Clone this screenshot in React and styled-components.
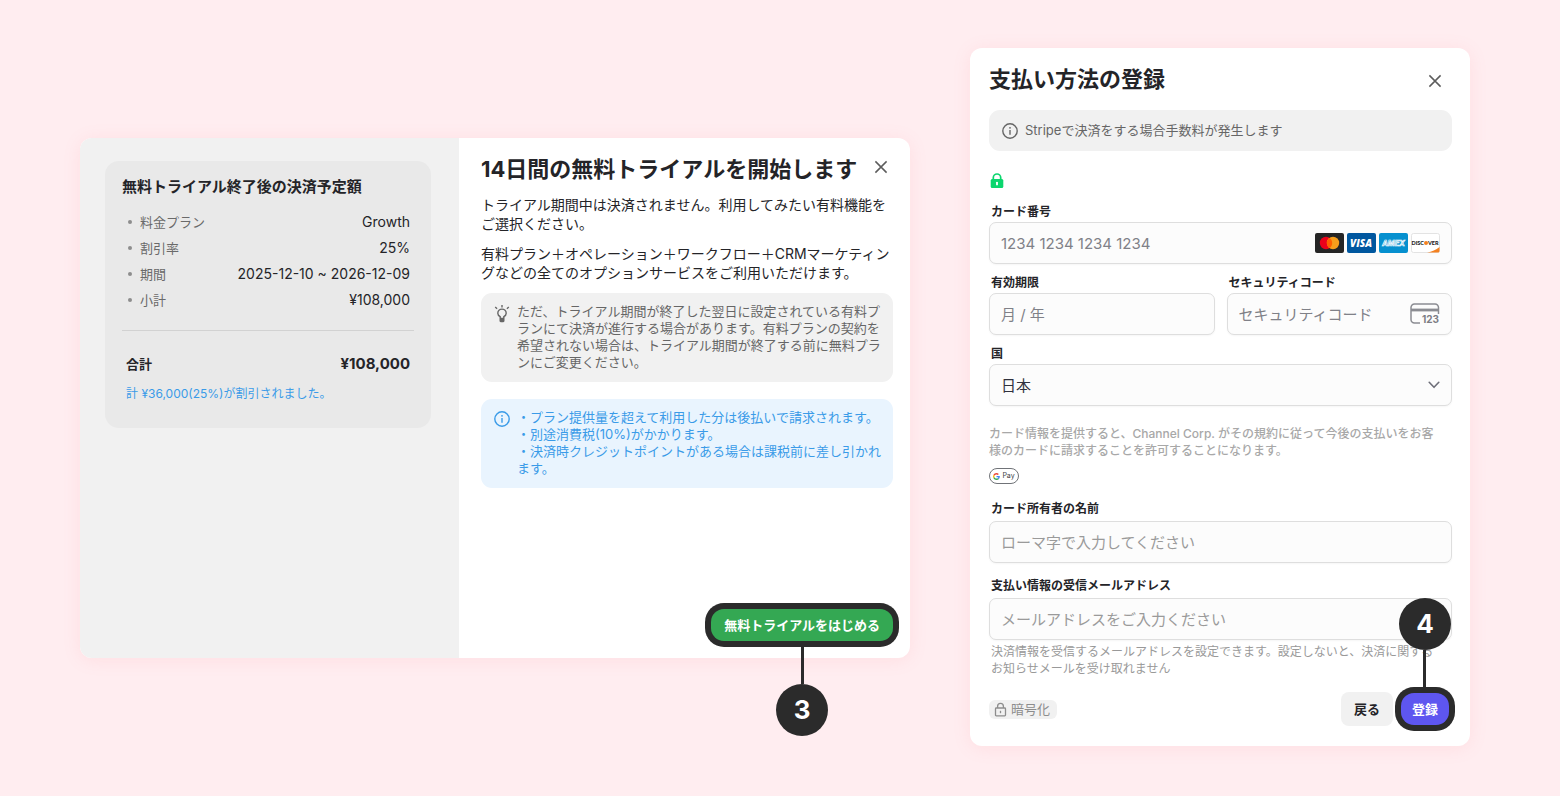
import React from "react";
import styled, { createGlobalStyle, css } from "styled-components";

const GlobalStyle = createGlobalStyle`
  *, *::before, *::after { box-sizing: border-box; }
  body {
    margin: 0;
    background: #ffedf0;
    color: #242428;
    font-family: Inter, "Noto Sans CJK JP", sans-serif;
    font-size: 13px;
    line-height: 17px;
  }
  h2, h3, p, ul, dl, dd { margin: 0; padding: 0; }
  button, input, select { font: inherit; color: inherit; }
`;

const Page = styled.main`
  min-height: 100vh;
  display: grid;
  grid-template-columns: minmax(0, 83fr) minmax(0, 50fr);
  align-content: center;
  align-items: end;
  gap: 60px;
  padding: 48px 90px 50px 80px;
`;

const Dialog = styled.section`
  background: #fff;
  border-radius: 12px;
  box-shadow: 0 2px 18px rgba(255, 120, 135, 0.12);
`;

const TrialDialog = styled(Dialog)`
  display: grid;
  grid-template-columns: 379px minmax(0, 1fr);
  min-height: 520px;
  margin-bottom: 88px;
`;

/* Order summary */
const Summary = styled.aside`
  padding: 23px 28px 23px 25px;
  background: #f1f1f1;
  border-radius: 12px 0 0 12px;
`;

const SummaryCard = styled.div`
  padding: 16px 17px 25px;
  background: #e9e9e9;
  border-radius: 14px;
`;

const SummaryTitle = styled.h3`
  font-size: 15px;
  line-height: 20px;
  font-weight: 700;
  margin-bottom: 12px;
`;

const SummaryList = styled.dl`
  padding-bottom: 17px;
  border-bottom: 1px solid #d2d2d2;
`;

const SummaryRow = styled.div`
  display: flex;
  align-items: center;
  justify-content: space-between;
  line-height: 26px;
  padding: 0 4px 0 6px;
`;

const SummaryTerm = styled.dt`
  display: flex;
  align-items: center;
  gap: 8px;
  color: #6a6a6a;
  &::before {
    content: "";
    width: 4px;
    height: 4px;
    border-radius: 50%;
    background: #8d8d8d;
  }
`;

const SummaryValue = styled.dd`
  font-size: 14px;
`;

const TotalRow = styled.div`
  display: flex;
  align-items: center;
  justify-content: space-between;
  padding: 0 4px;
  margin-top: 21px;
  line-height: 24px;
  font-weight: 700;
`;

const TotalValue = styled.strong`
  font-size: 15px;
  font-weight: 700;
`;

const DiscountNote = styled.p`
  margin-top: 9px;
  padding: 0 4px;
  font-size: 12px;
  line-height: 18px;
  color: #3a9be8;
`;

/* Trial details */
const TrialBody = styled.div`
  display: flex;
  flex-direction: column;
  padding: 17px 17px 17px 22px;
`;

const Header = styled.header`
  display: flex;
  justify-content: space-between;
  align-items: flex-start;
`;

const Title = styled.h2`
  font-size: 22px;
  line-height: 28px;
  font-weight: 700;
`;

const CloseButton = styled.button`
  display: grid;
  place-items: center;
  width: 24px;
  height: 24px;
  padding: 0;
  border: 0;
  background: none;
  color: #5c5c5c;
  margin: ${(p) => (p.$low ? "4px 5px 0 0" : "0")};
`;

const Paragraph = styled.p`
  font-size: 14px;
  line-height: 19px;
  margin-top: ${(p) => (p.$first ? 12 : 11)}px;
`;

const notice = {
  gray: css`
    background: #f1f1f1;
    color: #666;
  `,
  blue: css`
    background: #e9f4fe;
    color: #3a9be8;
  `,
};

const Notice = styled.div`
  display: flex;
  align-items: ${(p) => (p.$single ? "center" : "flex-start")};
  gap: 7px;
  padding: ${(p) => (p.$single ? "12px 13px" : "10px 10px 11px 13px")};
  margin-top: ${(p) => p.$space}px;
  border-radius: 11px;
  ${(p) => notice[p.$tone]}
  svg {
    flex: none;
    margin-top: ${(p) => (p.$single ? 0 : 2)}px;
  }
`;

const NoticeList = styled.ul`
  list-style: none;
`;

const Actions = styled.footer`
  display: flex;
  align-items: center;
  justify-content: flex-end;
  gap: 8px;
  margin-top: auto;
`;

const Highlight = styled.div`
  position: relative;
  border-radius: 13px;
  background: #2b2b2b;
  box-shadow: 0 0 0 6px #2b2b2b;
  margin-right: ${(p) => p.$inset || 0}px;
`;

const Callout = styled.div`
  position: absolute;
  left: 50%;
  transform: translateX(-50%);
  display: flex;
  flex-direction: ${(p) => (p.$above ? "column-reverse" : "column")};
  align-items: center;
  ${(p) => (p.$above ? "bottom" : "top")}: calc(100% + 5px);
  &::before {
    content: "";
    width: 3px;
    height: 38px;
    background: #2b2b2b;
  }
`;

const CalloutNumber = styled.span`
  display: grid;
  place-items: center;
  width: 52px;
  height: 52px;
  border-radius: 50%;
  background: #2b2b2b;
  color: #fff;
  font-size: 26px;
  line-height: 32px;
  font-weight: 700;
`;

const Button = styled.button`
  display: block;
  border: 0;
  padding: 0 ${(p) => (p.$compact ? 11 : 13)}px;
  height: ${(p) => (p.$plain ? 34 : 32)}px;
  border-radius: ${(p) => (p.$plain ? 8 : 13)}px;
  background: ${(p) => p.$bg};
  color: ${(p) => (p.$plain ? "#242428" : "#fff")};
  font-size: 13px;
  font-weight: 700;
  white-space: nowrap;
`;

/* Payment form */
const PaymentDialog = styled(Dialog)`
  padding: 17px 18px 20px 19px;
`;

const Secure = styled.div`
  display: flex;
  padding-left: 1px;
  margin: 22px 0 15px;
`;

const Field = styled.div`
  display: flex;
  flex-direction: column;
  gap: ${(p) => (p.$roomy ? 4 : 2)}px;
  margin-top: ${(p) => p.$space || 0}px;
`;

const Label = styled.label`
  padding-left: 2px;
  font-size: 12px;
  font-weight: ${(p) => (p.$bold ? 700 : 600)};
`;

const Columns = styled.div`
  display: grid;
  grid-template-columns: repeat(2, minmax(0, 1fr));
  gap: 12px;
  margin-top: 10px;
`;

const InputBox = styled.div`
  display: flex;
  align-items: center;
  height: 42px;
  padding: 0 11px;
  border: 1px solid #dedede;
  border-radius: 7px;
  background: #fcfcfc;
  box-shadow: 0 1px 2px rgba(0, 0, 0, 0.04);
  svg {
    flex: none;
  }
`;

const control = css`
  flex: 1;
  width: 100%;
  min-width: 0;
  height: 100%;
  padding: 0;
  border: 0;
  outline: 0;
  background: none;
  font-size: 15px;
`;

const Input = styled.input`
  ${control}
  &::placeholder {
    color: ${(p) => (p.$soft ? "#9a9a9a" : "#808188")};
    opacity: 1;
  }
`;

const Select = styled.select`
  ${control}
  appearance: none;
  color: #30313d;
`;

const CardBrands = styled.div`
  display: flex;
  gap: 3px;
`;

const Legal = styled.p`
  margin-top: 19px;
  padding-right: 8px;
  font-size: 12px;
  font-weight: 500;
  color: #a8a8a8;
`;

const PayBadge = styled.div`
  display: flex;
  align-items: center;
  justify-content: center;
  gap: 2px;
  width: 30px;
  height: 16px;
  margin: 9px 0 16px;
  border: 1px solid #707378;
  border-radius: 8px;
  font-size: 7px;
  line-height: 10px;
  color: #3c4043;
`;

const Helper = styled.p`
  margin-top: 3px;
  padding: 0 8px 0 2px;
  font-size: 12px;
  color: #999;
`;

const FormFooter = styled.div`
  display: flex;
  align-items: center;
  justify-content: space-between;
  margin-top: 15px;
`;

const Encrypted = styled.span`
  display: inline-flex;
  align-items: center;
  gap: 4px;
  height: 19px;
  padding: 0 7px 0 5px;
  border-radius: 6px;
  background: #f1f1f1;
  color: #8d8d8d;
`;

const CloseIcon = () => (
  <svg width="14" height="14" viewBox="0 0 14 14" fill="none" stroke="currentColor" strokeWidth="1.5">
    <path d="M1.4 1.4l11.2 11.2M12.6 1.4L1.4 12.6" />
  </svg>
);

const InfoIcon = () => (
  <svg width="16" height="16" viewBox="0 0 16 16" fill="none" stroke="currentColor" strokeWidth="1.4">
    <circle cx="8" cy="8" r="7.2" />
    <path d="M8 7v4.8" />
    <circle cx="8" cy="4.8" r="0.9" fill="currentColor" stroke="none" />
  </svg>
);

const BulbIcon = () => (
  <svg width="16" height="18" viewBox="0 0 16 18" fill="none" stroke="currentColor" strokeWidth="1.4">
    <path d="M6.2 13v-1.300C4.600 10.900 3.800 9.700 3.800 8.300a4.200 4.200 0 0 1 8.400 0c0 1.400-.8 2.600-2.400 3.400V13" />
    <path d="M5.500 12.800h5v3c0 .9-.5 1.400-1.300 1.400H6.800c-.8 0-1.300-.5-1.300-1.400z" fill="currentColor" stroke="none" />
    <path d="M8 0v2.400M1.200 2l1.900 1.700M14.800 2l-1.900 1.700" />
  </svg>
);

const GreenLock = () => (
  <svg width="14" height="15" viewBox="0 0 14 15">
    <path d="M3.300 7V4.700a3.700 3.700 0 0 1 7.400 0V7" fill="none" stroke="#0bd66e" strokeWidth="1.700" />
    <rect x="0.700" y="5.900" width="12.600" height="9" rx="1.500" fill="#0bd66e" />
    <path d="M7 8.700a1.100 1.100 0 0 1 .9 1.700v1.800H6.100v-1.800A1.100 1.100 0 0 1 7 8.700z" fill="#fff" />
  </svg>
);

const OutlineLock = () => (
  <svg width="13" height="15" viewBox="0 0 13 15" fill="none" stroke="currentColor" strokeWidth="1.300">
    <path d="M3.600 6V4.200a2.900 2.900 0 0 1 5.800 0V6" />
    <rect x="1.500" y="6" width="10" height="7.800" rx="0.800" />
    <path d="M6.500 8.800v2.400" />
  </svg>
);

const Mastercard = () => (
  <svg width="29" height="20" viewBox="0 0 29 20" role="img" aria-label="Mastercard">
    <rect width="29" height="20" rx="2" fill="#252525" />
    <circle cx="11" cy="10" r="6.200" fill="#eb001b" />
    <circle cx="18" cy="10" r="6.200" fill="#f79e1b" />
    <path d="M14.500 4.900a6.200 6.200 0 0 1 0 10.200a6.200 6.200 0 0 1 0-10.200z" fill="#ff5f00" />
  </svg>
);

const Visa = () => (
  <svg width="29" height="20" viewBox="0 0 29 20" role="img" aria-label="Visa">
    <rect width="29" height="20" rx="2" fill="#00579f" />
    <text x="14" y="14" textAnchor="middle" fontFamily="Open Sans" fontSize="10" fontWeight="800" fontStyle="italic" fill="#fff">VISA</text>
  </svg>
);

const Amex = () => (
  <svg width="29" height="20" viewBox="0 0 58 40" role="img" aria-label="American Express">
    <rect width="58" height="40" rx="4" fill="#0690cf" />
    <text x="29" y="25" textAnchor="middle" fontFamily="Inter" fontSize="15" fontWeight="700" fontStyle="italic" fill="#0690cf" stroke="#fff" strokeWidth="1.400">AMEX</text>
  </svg>
);

const Discover = () => (
  <svg width="29" height="20" viewBox="0 0 58 40" role="img" aria-label="Discover">
    <rect x="1" y="1" width="56" height="38" rx="4" fill="#fff" stroke="#e3e3e3" strokeWidth="2" />
    <path d="M32 39C42 37 50 34 57 28v8a3 3 0 0 1-3 3z" fill="#f48120" />
    <text x="26" y="24" textAnchor="end" fontFamily="Lato" fontSize="11" fontWeight="900" fill="#222">DISC</text>
    <circle cx="30" cy="20" r="4" fill="#f48120" />
    <text x="34" y="24" fontFamily="Lato" fontSize="11" fontWeight="900" fill="#222">VER</text>
  </svg>
);

const CvcIcon = () => (
  <svg width="30" height="22" viewBox="0 0 30 22" fill="none" stroke="#8b8c92">
    <path d="M10 20H4.500A3.500 3.500 0 0 1 1 16.500V4.500A3.500 3.500 0 0 1 4.500 1h20.500A3.500 3.500 0 0 1 28.500 4.500V11" strokeWidth="1.500" />
    <path d="M1 7h27.500" strokeWidth="2.800" />
    <text x="12" y="20" fontFamily="Inter" fontSize="10" fontWeight="700" fill="#7c7d84" stroke="none">123</text>
  </svg>
);

const Chevron = styled(({ className }) => (
  <svg className={className} width="12" height="8" viewBox="0 0 12 8" fill="none" stroke="#6d6e78" strokeWidth="1.600" strokeLinecap="round" strokeLinejoin="round">
    <path d="M1.200 1.300L6 6.300l4.800-5" />
  </svg>
))`
  pointer-events: none;
`;

const GoogleG = () => (
  <svg width="7" height="7" viewBox="0 0 48 48">
    <path fill="#EA4335" d="M24 9.500c3.540 0 6.710 1.220 9.210 3.600l6.850-6.850C35.900 2.380 30.470 0 24 0 14.620 0 6.510 5.380 2.560 13.220l7.980 6.190C12.430 13.720 17.740 9.500 24 9.500z" />
    <path fill="#4285F4" d="M46.980 24.550c0-1.570-.15-3.090-.38-4.550H24v9.020h12.940c-.58 2.960-2.260 5.480-4.780 7.180l7.730 6c4.510-4.180 7.090-10.360 7.090-17.650z" />
    <path fill="#FBBC05" d="M10.530 28.590c-.48-1.450-.76-2.990-.76-4.590s.27-3.140.76-4.590l-7.980-6.190C.92 16.460 0 20.120 0 24c0 3.880.92 7.540 2.560 10.780l7.970-6.190z" />
    <path fill="#34A853" d="M24 48c6.480 0 11.930-2.130 15.890-5.810l-7.730-6c-2.150 1.450-4.920 2.300-8.160 2.300-6.260 0-11.570-4.220-13.470-9.910l-7.980 6.190C6.510 42.620 14.620 48 24 48z" />
  </svg>
);

const summaryRows = [
  ["料金プラン", "Growth"],
  ["割引率", "25%"],
  ["期間", "2025-12-10 ~ 2026-12-09"],
  ["小計", "¥108,000"],
];

const billingNotes = [
  "・プラン提供量を超えて利用した分は後払いで請求されます。",
  "・別途消費税(10%)がかかります。",
  "・決済時クレジットポイントがある場合は課税前に差し引かれます。",
];

function StartTrial() {
  return (
    <TrialDialog aria-labelledby="trial-title">
      <Summary>
        <SummaryCard>
          <SummaryTitle>無料トライアル終了後の決済予定額</SummaryTitle>
          <SummaryList>
            {summaryRows.map(([term, value]) => (
              <SummaryRow key={term}>
                <SummaryTerm>{term}</SummaryTerm>
                <SummaryValue>{value}</SummaryValue>
              </SummaryRow>
            ))}
          </SummaryList>
          <TotalRow>
            <span>合計</span>
            <TotalValue>¥108,000</TotalValue>
          </TotalRow>
          <DiscountNote>計 ¥36,000(25%)が割引されました。</DiscountNote>
        </SummaryCard>
      </Summary>
      <TrialBody>
        <Header>
          <Title id="trial-title">14日間の無料トライアルを開始します</Title>
          <CloseButton type="button" aria-label="閉じる">
            <CloseIcon />
          </CloseButton>
        </Header>
        <Paragraph $first>
          トライアル期間中は決済されません。利用してみたい有料機能をご選択ください。
        </Paragraph>
        <Paragraph>
          有料プラン＋オペレーション＋ワークフロー＋CRMマーケティングなどの全てのオプションサービスをご利用いただけます。
        </Paragraph>
        <Notice $tone="gray" $space={11}>
          <BulbIcon />
          <p>
            ただ、トライアル期間が終了した翌日に設定されている有料プランにて決済が進行する場合があります。有料プランの契約を希望されない場合は、トライアル期間が終了する前に無料プランにご変更ください。
          </p>
        </Notice>
        <Notice $tone="blue" $space={17}>
          <InfoIcon />
          <NoticeList>
            {billingNotes.map((note) => (
              <li key={note}>{note}</li>
            ))}
          </NoticeList>
        </Notice>
        <Actions>
          <Highlight>
            <Button type="button" $bg="#34a853">無料トライアルをはじめる</Button>
            <Callout>
              <CalloutNumber>3</CalloutNumber>
            </Callout>
          </Highlight>
        </Actions>
      </TrialBody>
    </TrialDialog>
  );
}

function PaymentMethod() {
  return (
    <PaymentDialog aria-labelledby="payment-title">
      <Header>
        <Title id="payment-title">支払い方法の登録</Title>
        <CloseButton type="button" aria-label="閉じる" $low>
          <CloseIcon />
        </CloseButton>
      </Header>
      <Notice $tone="gray" $space={17} $single>
        <InfoIcon />
        <p>Stripeで決済をする場合手数料が発生します</p>
      </Notice>
      <Secure>
        <GreenLock />
      </Secure>
      <Field>
        <Label htmlFor="card-number">カード番号</Label>
        <InputBox>
          <Input id="card-number" placeholder="1234 1234 1234 1234" />
          <CardBrands>
            <Mastercard />
            <Visa />
            <Amex />
            <Discover />
          </CardBrands>
        </InputBox>
      </Field>
      <Columns>
        <Field>
          <Label htmlFor="expiry">有効期限</Label>
          <InputBox>
            <Input id="expiry" placeholder="月 / 年" />
          </InputBox>
        </Field>
        <Field>
          <Label htmlFor="cvc">セキュリティコード</Label>
          <InputBox>
            <Input id="cvc" placeholder="セキュリティコード" />
            <CvcIcon />
          </InputBox>
        </Field>
      </Columns>
      <Field $space={10}>
        <Label htmlFor="country">国</Label>
        <InputBox>
          <Select id="country" defaultValue="jp">
            <option value="jp">日本</option>
          </Select>
          <Chevron />
        </InputBox>
      </Field>
      <Legal>
        カード情報を提供すると、Channel Corp. がその規約に従って今後の支払いをお客様のカードに請求することを許可することになります。
      </Legal>
      <PayBadge>
        <GoogleG />
        <span>Pay</span>
      </PayBadge>
      <Field $roomy>
        <Label htmlFor="holder" $bold>カード所有者の名前</Label>
        <InputBox>
          <Input id="holder" $soft placeholder="ローマ字で入力してください" />
        </InputBox>
      </Field>
      <Field $roomy $space={14}>
        <Label htmlFor="email" $bold>支払い情報の受信メールアドレス</Label>
        <InputBox>
          <Input id="email" type="email" $soft placeholder="メールアドレスをご入力ください" />
        </InputBox>
      </Field>
      <Helper>
        決済情報を受信するメールアドレスを設定できます。設定しないと、決済に関するお知らせメールを受け取れません
      </Helper>
      <FormFooter>
        <Encrypted>
          <OutlineLock />
          暗号化
        </Encrypted>
        <Actions>
          <Button type="button" $plain $bg="#f1f1f1">戻る</Button>
          <Highlight $inset={3}>
            <Button type="button" $compact $bg="#5e56f0">登録</Button>
            <Callout $above>
              <CalloutNumber>4</CalloutNumber>
            </Callout>
          </Highlight>
        </Actions>
      </FormFooter>
    </PaymentDialog>
  );
}

export default function App() {
  return (
    <>
      <GlobalStyle />
      <Page>
        <StartTrial />
        <PaymentMethod />
      </Page>
    </>
  );
}
